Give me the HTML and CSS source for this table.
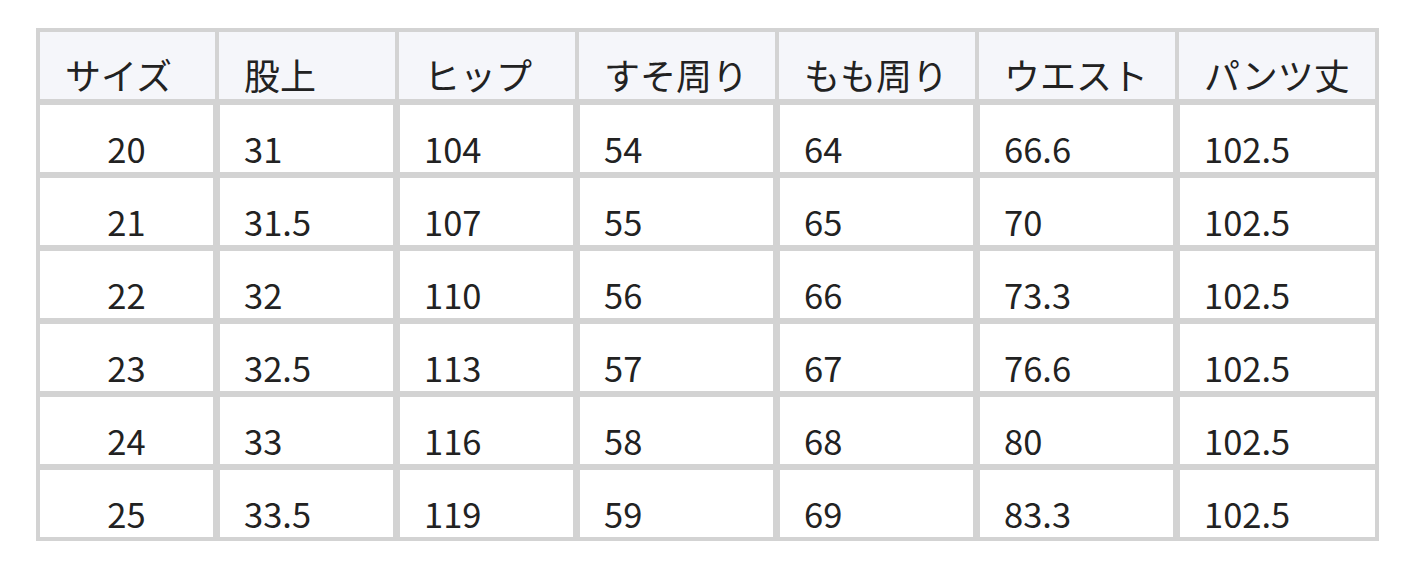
FILE: index.html
```
<!DOCTYPE html>
<html lang="ja">
<head>
<meta charset="utf-8">
<title>サイズ表</title>
<link rel="stylesheet" href="styles.css">
</head>
<body>
<div class="page">
  <table class="size-table">
    <colgroup>
      <col class="c1"><col class="c2"><col class="c3"><col class="c4"><col class="c5"><col class="c6"><col class="c7">
    </colgroup>
    <thead>
      <tr><th>サイズ</th><th>股上</th><th>ヒップ</th><th>すそ周り</th><th>もも周り</th><th>ウエスト</th><th>パンツ丈</th></tr>
    </thead>
    <tbody>
      <tr><td>20</td><td>31</td><td>104</td><td>54</td><td>64</td><td>66.6</td><td>102.5</td></tr>
      <tr><td>21</td><td>31.5</td><td>107</td><td>55</td><td>65</td><td>70</td><td>102.5</td></tr>
      <tr><td>22</td><td>32</td><td>110</td><td>56</td><td>66</td><td>73.3</td><td>102.5</td></tr>
      <tr><td>23</td><td>32.5</td><td>113</td><td>57</td><td>67</td><td>76.6</td><td>102.5</td></tr>
      <tr><td>24</td><td>33</td><td>116</td><td>58</td><td>68</td><td>80</td><td>102.5</td></tr>
      <tr><td>25</td><td>33.5</td><td>119</td><td>59</td><td>69</td><td>83.3</td><td>102.5</td></tr>
    </tbody>
  </table>
</div>
</body>
</html>
```
FILE: styles.css
```
html, body {
  margin: 0;
  padding: 0;
  background: #ffffff;
}
.page {
  padding: 28px 36px;
  font-family: "Noto Sans CJK JP", "Noto Sans", sans-serif;
  color: #222222;
}
.size-table {
  table-layout: fixed;
  width: 1343px;
  border-collapse: separate;
  border-spacing: 0;
}
.c1 { width: 179px; }
.c2 { width: 180px; }
.c3 { width: 180px; }
.c4 { width: 200px; }
.c5 { width: 200px; }
.c6 { width: 200px; }
.c7 { width: 204px; }

.size-table th,
.size-table td {
  box-sizing: border-box;
  border: 0 solid #d3d3d3;
  text-align: left;
  font-weight: 400;
  line-height: 48px;
  white-space: nowrap;
  vertical-align: top;
}
.size-table th {
  background: #f5f6fa;
  font-size: 36px;
  border-top-width: 4px;
  border-left-width: 4px;
  height: 71px;
  padding: 18px 0 0 25px;
}
.size-table th:last-child {
  border-right-width: 4px;
}
.size-table td {
  background: #ffffff;
  font-size: 34.5px;
  border-top-width: 6px;
  border-left-width: 5px;
  border-right-width: 2px;
  height: 72.8px;
  padding: 19px 0 0 24px;
}
.size-table td:first-child {
  border-left-width: 4px;
  text-align: center;
  padding-left: 0;
}
.size-table td:last-child {
  border-right-width: 4px;
}
.size-table tbody tr:last-child td {
  border-bottom-width: 4px;
  height: 76.8px;
}
```
